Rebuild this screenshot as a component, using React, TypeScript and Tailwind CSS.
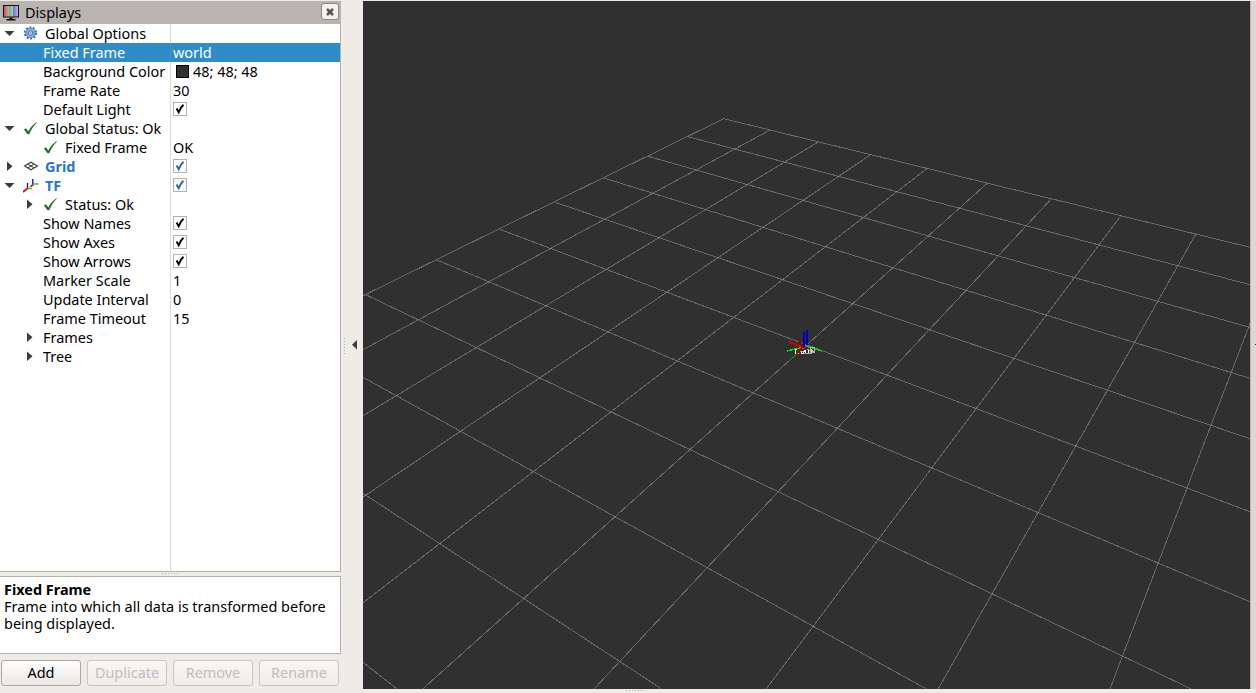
import { ReactNode } from 'react';

type IconName = 'gear' | 'ok' | 'grid' | 'tf';

interface Row {
  label: string;
  depth: 0 | 1 | 2;
  arrow?: 'open' | 'closed';
  icon?: IconName;
  value?: string;
  checked?: boolean;
  swatch?: boolean;
  display?: boolean;
  selected?: boolean;
}

const rows: Row[] = [
  { label: 'Global Options', depth: 0, arrow: 'open', icon: 'gear' },
  { label: 'Fixed Frame', depth: 1, value: 'world', selected: true },
  { label: 'Background Color', depth: 1, value: '48; 48; 48', swatch: true },
  { label: 'Frame Rate', depth: 1, value: '30' },
  { label: 'Default Light', depth: 1, checked: true },
  { label: 'Global Status: Ok', depth: 0, arrow: 'open', icon: 'ok' },
  { label: 'Fixed Frame', depth: 1, icon: 'ok', value: 'OK' },
  { label: 'Grid', depth: 0, arrow: 'closed', icon: 'grid', checked: true, display: true },
  { label: 'TF', depth: 0, arrow: 'open', icon: 'tf', checked: true, display: true },
  { label: 'Status: Ok', depth: 1, arrow: 'closed', icon: 'ok' },
  { label: 'Show Names', depth: 1, checked: true },
  { label: 'Show Axes', depth: 1, checked: true },
  { label: 'Show Arrows', depth: 1, checked: true },
  { label: 'Marker Scale', depth: 1, value: '1' },
  { label: 'Update Interval', depth: 1, value: '0' },
  { label: 'Frame Timeout', depth: 1, value: '15' },
  { label: 'Frames', depth: 1, arrow: 'closed' },
  { label: 'Tree', depth: 1, arrow: 'closed' },
];

// x1, y1, x2, y2 in viewport pixels
const gridLines = [
  [360.7, 117.7, 887, 246.3],
  [325, 135.7, 887, 283.7],
  [285, 155.3, 887, 326.5],
  [240.7, 177, 887, 377.3],
  [192, 201.3, 887, 437.7],
  [136.7, 228.3, 887, 510.7],
  [74, 259, 887, 600.7],
  [2.7, 293.7, 827.7, 687.7],
  [0, 376.3, 563, 687.7],
  [0, 492.3, 298.3, 687.7],
  [0, 661.3, 33.7, 687.7],
  [360.7, 117.7, 0, 294.7],
  [406.7, 129.2, 0, 348.7],
  [455.4, 140.8, 0, 414.7],
  [507.9, 153.6, 0, 496],
  [564.2, 167.4, 0, 601.7],
  [624.4, 182.1, 60, 687.7],
  [688.5, 197.7, 231.3, 687.7],
  [757.9, 214.7, 403.3, 687.7],
  [832.7, 233.3, 575.3, 687.7],
  [887, 322.5, 747, 687.7],
];

const Arrow = ({ state }: { state?: 'open' | 'closed' }) => (
  <svg className="h-[19px] w-5 shrink-0" viewBox="0 0 20 19" fill="#3c3c3c">
    {state === 'open' && <path d="M4.5 7h10l-5 5z" />}
    {state === 'closed' && <path d="M7 4.500v9.500l5.500-4.750z" />}
  </svg>
);

const icons: Record<IconName, ReactNode> = {
  gear: (
    <>
      <circle cx="7.500" cy="7" r="5.500" fill="none" stroke="#3a6ab0" strokeWidth="2.200" strokeDasharray="1.900 1.550" />
      <circle cx="7.500" cy="7" r="4.700" fill="#8fb2e0" stroke="#4a78ba" strokeWidth="0.800" />
      <circle cx="7.500" cy="7" r="2.300" fill="#d5e2f4" stroke="#3f6fb4" strokeWidth="1" />
      <circle cx="7.500" cy="7" r="0.800" fill="#3f6fb4" />
    </>
  ),
  ok: <path d="M.900 8.500 3 7.200l2.300 3.400C7.500 6 10.200 3.300 13.500.900l.400.500C10.800 4.600 8.200 8.500 6.200 13.200H4.500z" fill="#1f7326" />,
  grid: (
    <path
      d="M1.500 7 8 3.200 14.500 7 8 10.800zM4.750 5.100l6.500 3.800M11.250 5.100l-6.500 3.800"
      fill="none"
      stroke="#3c3c3c"
      strokeWidth="1.100"
    />
  ),
  tf: (
    <g fill="none" strokeWidth="1.300">
      <path d="M4.500 10.500V5M9.800 6V1" stroke="#0000f0" />
      <path d="m4.500 10.500-4.500 3.500M10.500 6.500 7.500 8.500" stroke="#f00000" strokeWidth="1.900" />
      <path d="M4.500 10.500h4.500M10.500 6H15.500" stroke="#00e800" />
      <path d="M5 10 7.500 8.300" stroke="#e8a0a0" strokeWidth="1" />
    </g>
  ),
};

const TreeIcon = ({ name }: { name: IconName }) => (
  <svg className="mr-1.5 ml-[3px] size-4 shrink-0" viewBox="0 0 16 16">
    {icons[name]}
  </svg>
);

const Check = ({ blue }: { blue?: boolean }) => (
  <span className="mb-px flex size-[14px] items-center justify-center border border-[#b4b0ac] bg-white">
    <svg className="size-3" viewBox="0 0 12 12">
      <path
        d="M2.500 5.500 4.700 9.300C5.800 6 7.200 3.700 9.500 1.800"
        fill="none"
        stroke={blue ? '#2465ac' : '#000'}
        strokeWidth="1.900"
      />
    </svg>
  </span>
);

const TreeRow = ({ row }: { row: Row }) => (
  <div className={`flex h-[19px] leading-[19px] ${row.selected ? 'bg-[#308cc6] text-white' : ''}`}>
    <div className={`flex w-[171px] shrink-0 items-center border-r ${row.selected ? 'border-[#4294ca]' : 'border-[#dcdcdc]'}`}>
      {row.depth === 1 && <span className="w-5 shrink-0" />}
      <Arrow state={row.arrow} />
      {row.icon ? <TreeIcon name={row.icon} /> : <span className="w-[3px] shrink-0" />}
      <span className={`whitespace-nowrap ${row.display ? 'font-bold text-[#2a76c6]' : ''}`}>{row.label}</span>
    </div>
    <div className="flex h-[18px] items-center pl-0.5 leading-[18px]">
      {row.swatch && <span className="mt-px mr-1 ml-[3px] size-[13px] border border-black bg-[#303030]" />}
      {row.checked && <Check blue={row.display} />}
      <span className="leading-[19px]">{row.value}</span>
    </div>
  </div>
);

const Handle = () => (
  <svg className="h-[3px] w-[17px]" viewBox="0 0 17 3" shapeRendering="crispEdges">
    <path d="M0 1.500h17" stroke="#b3aea8" strokeDasharray="1 2" />
  </svg>
);

const PanelButton = ({ label, disabled }: { label: string; disabled?: boolean }) => (
  <button
    disabled={disabled}
    className={`flex h-[26px] w-20 justify-center rounded-[3px] border bg-linear-to-b leading-[24px] ${
      disabled
        ? 'border-[#c9c5c1] from-[#f8f7f5] to-[#efecea] text-[#bebebe]'
        : 'border-[#aaa6a2] from-[#fefefe] to-[#ebe8e6] text-black'
    }`}
  >
    <span className="leading-[23px]">{label}</span>
  </button>
);

const Displays = () => (
  <div className="flex w-[341px] flex-col">
    <div className="flex h-[23px] items-center bg-[#b9b4b0] pr-0.5 pl-[3px]">
      <svg className="size-4" viewBox="0 0 16 16">
        <defs>
          <linearGradient id="screen">
            <stop offset="0" stopColor="#b65a60" />
            <stop offset="0.330" stopColor="#d8a0a0" />
            <stop offset="0.340" stopColor="#64b478" />
            <stop offset="0.660" stopColor="#a0dca4" />
            <stop offset="0.670" stopColor="#7870d8" />
            <stop offset="1" stopColor="#b4b0f4" />
          </linearGradient>
        </defs>
        <path d="M0 0h16v12.500H0z" fill="#111" />
        <path d="M1 1h14v10.500H1z" fill="url(#screen)" />
        <path d="M6.500 12.500h3v1.500h3v1.500h-9V14h3z" fill="#111" />
      </svg>
      <span className="ml-1.5 flex-1">Displays</span>
      <span className="mb-0.5 flex h-[17px] w-[18px] items-center justify-center rounded-[3px] border border-[#8c8884] bg-[#f3f2f0]">
        <svg className="size-2" viewBox="0 0 8 8">
          <path d="m1 1 6 6M7 1 1 7" stroke="#555" strokeWidth="2.600" />
        </svg>
      </span>
    </div>
    <div className="flex h-[548px] flex-col border-r border-b border-[#b4b1ad] bg-white">
      {rows.map((row, i) => (
        <TreeRow key={i} row={row} />
      ))}
      <div className="w-[171px] flex-1 border-r border-[#dcdcdc]" />
    </div>
    <div className="flex h-1 justify-center">
      <Handle />
    </div>
    <div className="h-[78px] border border-l-0 border-[#b4b1ad] bg-white pt-1 pl-1 leading-[17px]">
      <div className="font-bold">Fixed Frame</div>
      <div>
        Frame into which all data is transformed before
        <br />
        being displayed.
      </div>
    </div>
    <div className="flex gap-1.5 pt-1.5 pl-px">
      <PanelButton label="Add" />
      <PanelButton label="Duplicate" disabled />
      <PanelButton label="Remove" disabled />
      <PanelButton label="Rename" disabled />
    </div>
  </div>
);

const Viewport = () => (
  <svg className="h-[688px] w-[887px] bg-[#303030]" viewBox="0 0 887 688">
    <g stroke="#a0a0a4" strokeOpacity="0.5" shapeRendering="crispEdges">
      {gridLines.map(([x1, y1, x2, y2], i) => (
        <line key={i} x1={x1} y1={y1} x2={x2} y2={y2} />
      ))}
    </g>
    {/* robot frames at the origin */}
    <g fill="none" shapeRendering="crispEdges">
      <path d="m424 350 17-4" stroke="#00e000" strokeWidth="1.500" />
      <path d="m443 345 16 5" stroke="#00d800" strokeWidth="1.500" />
      <path d="m430 356 7-6" stroke="#008c00" strokeWidth="1.500" />
      <path d="m426 341 16 6" stroke="#d80000" strokeWidth="2" />
      <path d="m434 337 6 8" stroke="#8c0000" strokeWidth="1.500" />
      <path d="M432 348v5M432 348h2M435 353l2-4 2 3M440 353l2-5v5M445 353v-4h3v4M448 348l3 4M451 347v4M438 352h10" stroke="#f4f4f4" />
      <path d="M440 352h9M444 348l7 3M447 346h4v5h-4zM435 350h5" stroke="#b0b0b0" />
      <path d="m433 353 5-5M442 346v3" stroke="#b00000" strokeWidth="1.500" />
      <path d="M441 331v15M444 329v15" stroke="#0000b8" strokeWidth="2" />
    </g>
  </svg>
);

const App = () => (
  <div className="flex h-[693px] w-[1256px] overflow-hidden bg-[#efebe7] pt-px font-['Noto_Sans',sans-serif] text-[14.450px] text-black">
    <Displays />
    <div className="flex w-[22px] items-start pt-[335px]">
      <svg className="h-5 w-[22px]" viewBox="0 0 22 20">
        <path d="M3.500 2v17" stroke="#b3aea8" strokeDasharray="1 2" shapeRendering="crispEdges" />
        <path d="M16 4v9.500l-5-4.750z" fill="#3c3c3c" />
      </svg>
    </div>
    <div className="flex w-[887px] flex-col">
      <Viewport />
      <div className="ml-[263px]">
        <Handle />
      </div>
    </div>
    <div className="flex h-[688px] flex-1 items-start border-l border-[#b9b4b0] bg-[#dcd7d4] pt-[343px]">
      <div className="ml-1 h-px w-px bg-[#3c3c3c]" />
    </div>
  </div>
);

export default App;
